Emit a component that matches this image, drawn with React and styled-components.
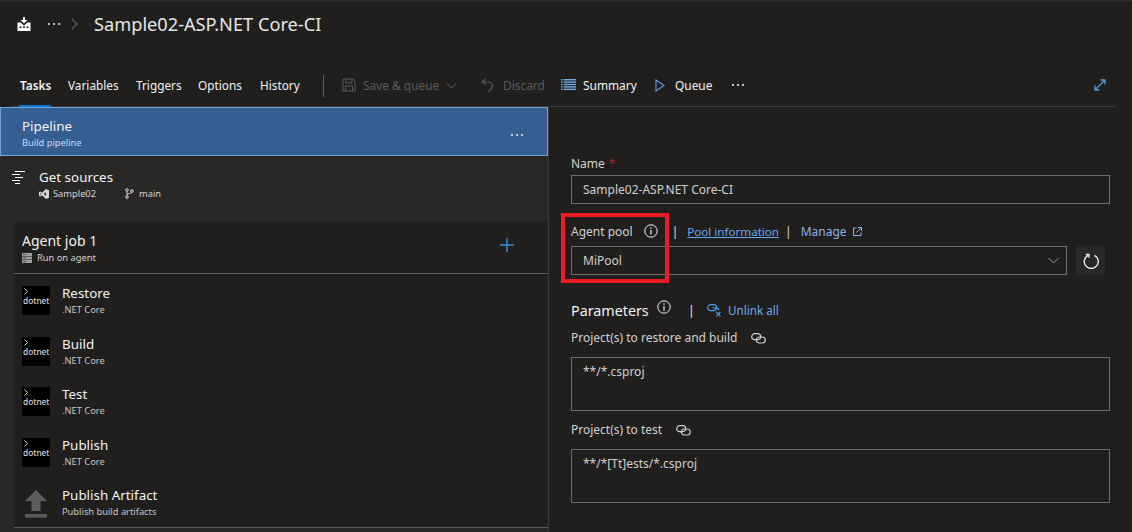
import React from 'react';
import styled, { createGlobalStyle } from 'styled-components';

const Global = createGlobalStyle`
html, body { margin: 0; padding: 0; background: #201f1e; }
body { font-family: "Noto Sans", "Open Sans", sans-serif; color: #fff; overflow: hidden; }
* { box-sizing: border-box; }
`;

const Page = styled.div`
  position: relative;
  width: 1132px;
  height: 532px;
  background: #201f1e;
  overflow: hidden;
  border-top: 2px solid #2b2a29;
`;

const TitleBar = styled.header`
  height: 64px;
  display: flex;
  align-items: flex-start;
  padding: 12px 0 0 17px;
`;

const Crumb = styled.div`
  height: 20px;
  display: flex;
  align-items: center;
  margin-right: ${p => p.$mr || 0}px;
  color: ${p => p.$color || '#fff'};
`;

const Title = styled.h1`
  margin: 0;
  font-size: 18.2px;
  line-height: 20px;
  font-weight: 400;
  color: #e6e6e6;
`;

const Toolbar = styled.nav`
  height: 41px;
  margin-left: 11px;
  width: 1104px;
  border-bottom: 1px solid #3b3a39;
  display: flex;
  align-items: flex-start;
  padding-top: 10px;
`;

const Tab = styled.div`
  position: relative;
  width: ${p => p.$w}px;
  flex: none;
  font-size: 11.8px;
  line-height: 18px;
  color: #f3f2f1;
  font-weight: ${p => (p.$active ? 600 : 400)};
  padding-left: ${p => p.$pl || 0}px;
  ${p => p.$active && `
    &:after {
      content: "";
      position: absolute;
      left: 8px;
      bottom: -13px;
      width: 32px;
      height: 2px;
      background: #0a78d4;
    }
  `}
`;

const Divider = styled.div`
  width: 1px;
  height: 22px;
  background: #605e5c;
  margin: -1px 18px 0 0;
  flex: none;
`;

const Action = styled.div`
  display: flex;
  align-items: center;
  height: 18px;
  flex: none;
  width: ${p => p.$w}px;
  gap: ${p => p.$gap || 6}px;
  font-size: 11.9px;
  color: ${p => (p.$off ? '#5c5b59' : '#f3f2f1')};
`;

const ExpandSlot = styled.div`
  margin-left: auto;
  margin-right: 9px;
  height: 18px;
  display: flex;
  align-items: center;
`;

const Main = styled.main`
  display: flex;
  height: 425px;
`;

const LeftPane = styled.section`
  width: 549px;
  flex: none;
  border-right: 1px solid #3b3a39;
  background: #292827;
`;

const PipelineRow = styled.div`
  height: 49px;
  background: #365f91;
  border: 1px solid #6fa3dc;
  padding: 9px 21px 0;
  display: flex;
  justify-content: space-between;
`;

const RowTitle = styled.div`
  font-size: 13.4px;
  line-height: 18px;
  color: #f3f2f1;
`;

const RowSub = styled.div`
  font-size: 9.3px;
  line-height: 13px;
  margin-top: ${p => p.$mt || 0}px;
  color: ${p => p.$color || '#d5d3d1'};
  display: flex;
  align-items: center;
  gap: ${p => p.$gap || 4}px;
`;

const More = styled.div`
  color: #dbe7f5;
  margin: 3px 2px 0 0;
`;

const SourcesRow = styled.div`
  height: 66px;
  display: flex;
  padding: 12px 0 0 12px;
  gap: 14px;
`;

const SourceMeta = styled.div`
  display: flex;
  margin-top: 1px;
`;

const SourceItem = styled.div`
  width: ${p => p.$w}px;
  display: flex;
  align-items: center;
  gap: ${p => p.$gap}px;
  font-size: 9.3px;
  line-height: 13px;
  color: #d5d3d1;
`;

const JobBlock = styled.div`
  margin-left: 14px;
  height: 306px;
  background: #201f1e;
  border-bottom: 1px solid #5c5b59;
`;

const JobHead = styled.div`
  height: 52px;
  border-bottom: 1px solid #5c5b59;
  padding: 10px 34px 0 8px;
  display: flex;
  justify-content: space-between;
  align-items: flex-start;
`;

const JobTitle = styled.div`
  font-size: 14px;
  line-height: 18px;
  color: #f3f2f1;
`;

const AddBtn = styled.div`
  margin-top: 3px;
  color: #3a8ee6;
`;

const TaskRow = styled.div`
  height: 50.6px;
  padding: 12px 0 0 8px;
  display: flex;
  gap: 12px;
`;

const DotnetBadge = styled.div`
  width: 28px;
  height: 29px;
  background: #000;
  color: #d8d8d8;
  flex: none;
  padding: 2px 0 0 1px;
  display: flex;
  flex-direction: column;
  overflow: hidden;
`;

const DotnetText = styled.span`
  font-size: 8.3px;
  line-height: 10px;
  font-weight: 500;
  margin-top: 1px;
`;

const ArtifactIcon = styled.div`
  width: 28px;
  height: 29px;
  flex: none;
  padding-top: 1px;
`;

const TaskText = styled.div`
  margin-top: -2px;
`;

const TaskName = styled.div`
  font-size: 13.4px;
  line-height: 18px;
  color: #f3f2f1;
`;

const TaskSub = styled.div`
  font-size: 9.3px;
  line-height: 13px;
  margin-top: 1px;
  color: #c8c6c4;
`;

const RightPane = styled.section`
  flex: 1;
  padding: 49px 22px 0 22px;
`;

const Label = styled.div`
  height: 16px;
  font-size: 12px;
  line-height: 16px;
  color: #d2d0ce;
  display: flex;
  align-items: center;
`;

const Star = styled.span`
  color: #a4262c;
  margin-left: 4px;
`;

const Field = styled.div`
  height: 29px;
  width: ${p => p.$w || 539}px;
  margin-top: ${p => p.$mt || 0}px;
  border: 1px solid #6e6d6b;
  font-size: 12px;
  line-height: 27px;
  padding-left: 11px;
  color: #d2d0ce;
  display: flex;
  justify-content: space-between;
  align-items: center;
`;

const AreaField = styled.div`
  height: 54px;
  width: 539px;
  border: 1px solid #6e6d6b;
  font-size: 12px;
  line-height: 16px;
  padding: 6px 0 0 11px;
  color: #d2d0ce;
`;

const PoolLabelRow = styled.div`
  height: 16px;
  margin-top: 19px;
  display: flex;
  align-items: center;
  font-size: 12px;
  color: #d2d0ce;
`;

const Sep = styled.span`
  display: inline-flex;
  align-items: center;
  color: #e1dfdd;
  margin: ${p => p.$m};
`;

const Link = styled.span`
  color: ${p => (p.$soft ? '#8ab4e8' : '#69a9ee')};
  font-size: ${p => p.$fs || 12}px;
  margin-left: ${p => p.$ml || 0}px;
  text-decoration: ${p => (p.$line ? 'underline' : 'none')};
`;

const PoolRow = styled.div`
  display: flex;
  margin-top: 7px;
  gap: 9px;
`;

const RefreshBtn = styled.div`
  width: 29px;
  height: 29px;
  background: #292827;
  display: flex;
  align-items: center;
  justify-content: center;
`;

const ParamsHead = styled.div`
  height: 22px;
  margin-top: 24px;
  display: flex;
  align-items: center;
`;

const ParamsTitle = styled.div`
  font-size: 14.3px;
  color: #f3f2f1;
`;

const ParamSep = styled(Sep)`
  font-size: 13px;
`;

const ParamLabel = styled(Label)`
  margin-top: ${p => p.$mt}px;
  margin-bottom: ${p => p.$mb}px;
`;

const Annotation = styled.div`
  position: absolute;
  left: 561px;
  top: 211px;
  width: 108px;
  height: 70px;
  border: 4px solid #ed1c24;
  pointer-events: none;
`;

const Dots = ({ size = 14, color = 'currentColor' }) => (
  <svg width={size} height="4" viewBox="0 0 14 4">
    <circle cx="2" cy="2" r="1.1" fill={color} />
    <circle cx="7" cy="2" r="1.1" fill={color} />
    <circle cx="12" cy="2" r="1.1" fill={color} />
  </svg>
);

const PipelinesIcon = () => (
  <svg width="14" height="14" viewBox="0 0 14 14" fill="#fff">
    <path d="M6 0h2v3h2.500L7 6.400 3.500 3H6z" />
    <path d="M.5 5.500h3L7 8.500l3.500-3h3V14H.5z" />
    <rect x="2.500" y="9.500" width="2" height="1.500" fill="#201f1e" />
    <rect x="6" y="9.500" width="2" height="1.500" fill="#201f1e" />
    <rect x="9.500" y="9.500" width="2" height="1.500" fill="#201f1e" />
  </svg>
);

const Chevron = ({ color = '#605e5c', w = 7, h = 12 }) => (
  <svg width={w} height={h} viewBox="0 0 7 12" fill="none" stroke={color} strokeWidth="1.100">
    <path d="M1 1l5 5-5 5" />
  </svg>
);

const SaveIcon = () => (
  <svg width="14" height="14" viewBox="0 0 14 14" fill="none" stroke="#5c5b59">
    <path d="M1 1h10l2 2v10H1z" />
    <path d="M4 1v4h6V1M3.500 13V8h7v5" />
  </svg>
);

const DownCaret = ({ color = '#5c5b59', w = 11 }) => (
  <svg width={w} height="7" viewBox="0 0 11 7" fill="none" stroke={color} strokeWidth="1">
    <path d="M.5 1l5 5 5-5" />
  </svg>
);

const UndoIcon = () => (
  <svg width="13" height="15" viewBox="0 0 13 15" fill="none" stroke="#5c5b59" strokeWidth="1.100">
    <path d="M4.500 1L1 4l4 2.500" />
    <path d="M1.500 4h5c3 0 5 1.500 5 4 0 2.500-2 4-4 6" />
  </svg>
);

const SummaryIcon = () => (
  <svg width="15" height="12" viewBox="0 0 15 12" fill="#6ea8e6">
    {[0, 2.4, 4.8, 7.2, 9.6].map(y => (
      <g key={y}>
        <rect x="0" y={y} width="1.500" height="1.400" />
        <rect x="2.500" y={y} width="12.500" height="1.400" />
      </g>
    ))}
  </svg>
);

const PlayIcon = () => (
  <svg width="10" height="13" viewBox="0 0 10 13" fill="none" stroke="#6f94e8" strokeWidth="1.100">
    <path d="M1 1l8 5.500L1 12z" />
  </svg>
);

const ExpandIcon = () => (
  <svg width="12" height="12" viewBox="0 0 12 12" fill="none" stroke="#4f9be8" strokeWidth="1.300">
    <path d="M1 11L11 1M6.500 1H11v4.500M1 6.500V11h4.500" />
  </svg>
);

const SourcesIcon = () => (
  <svg width="13" height="13" viewBox="0 0 13 13" fill="#fff" style={{ marginTop: 3 }}>
    <rect x="3" y="0" width="10" height="1" />
    <rect x="0" y="3" width="8" height="1" />
    <rect x="3" y="6" width="8" height="1" />
    <rect x="0" y="9" width="8" height="1" />
    <rect x="3" y="12" width="5" height="1" />
  </svg>
);

const VsIcon = () => (
  <svg width="10" height="10" viewBox="0 0 10 10" fill="#d5d3d1">
    <path d="M7 0l3 1.200v7.600L7 10 3 6.200 1.200 7.600 0 7V3l1.200-.6L3 3.800zM7 3L4.800 5 7 7zM1.200 4v2l1-1z" fillRule="evenodd" />
  </svg>
);

const BranchIcon = () => (
  <svg width="9" height="11" viewBox="0 0 9 11" fill="none" stroke="#d5d3d1" strokeWidth="1">
    <circle cx="2" cy="2" r="1.300" />
    <circle cx="2" cy="9" r="1.300" />
    <circle cx="7" cy="3" r="1.300" />
    <path d="M2 3.300v4.400M2 6.500c0-1 4-.8 5-2.200" />
  </svg>
);

const ServerIcon = () => (
  <svg width="10" height="10" viewBox="0 0 10 10" fill="#a19f9d" style={{ display: 'block' }}>
    <rect x="0" y="0" width="10" height="3" />
    <rect x="0" y="3.500" width="10" height="3" />
    <rect x="0" y="7" width="10" height="3" />
    <rect x="1" y="1" width="3" height=".8" fill="#3b3a39" />
    <rect x="1" y="4.500" width="3" height=".8" fill="#3b3a39" />
    <rect x="1" y="8" width="3" height=".8" fill="#3b3a39" />
  </svg>
);

const PlusIcon = () => (
  <svg width="14" height="14" viewBox="0 0 14 14" fill="currentColor">
    <rect x="6.300" y="0" width="1.400" height="14" />
    <rect x="0" y="6.300" width="14" height="1.400" />
  </svg>
);

const PromptIcon = () => (
  <svg width="4" height="7" viewBox="0 0 4 7" fill="none" stroke="#d8d8d8" strokeWidth="1" style={{ display: 'block', flex: 'none', marginLeft: 1 }}>
    <path d="M.5.5l3 3-3 3" />
  </svg>
);

const UploadIcon = () => (
  <svg width="28" height="29" viewBox="0 0 28 29" fill="#5e5d5c">
    <path d="M14 1l11 11h-6.500v10h-9V12H3z" />
    <rect x="3" y="25" width="22" height="3.500" />
  </svg>
);

const InfoIcon = ({ size = 14 }) => (
  <svg width={size} height={size} viewBox="0 0 14 14" fill="none" stroke="#f3f2f1" strokeWidth="1">
    <circle cx="7" cy="7" r="6.200" />
    <path d="M7 6v4.500" strokeWidth="1.200" />
    <circle cx="7" cy="4" r=".8" fill="#f3f2f1" stroke="none" />
  </svg>
);

const ExternalIcon = () => (
  <svg width="9" height="9" viewBox="0 0 9 9" fill="none" stroke="#8ab4e8" strokeWidth="1">
    <path d="M3.500 1H.5v7.500H8V5.500" />
    <path d="M3.500 5.500L8 1M5 .5h3.500V4" />
  </svg>
);

const RefreshIcon = () => (
  <svg width="16" height="16" viewBox="0 0 16 16" fill="none" stroke="#f3f2f1" strokeWidth="1.300">
    <path d="M5 2.300a7 7 0 1 0 6.500 0" />
    <path d="M2.800 1.500H6v3.300" />
  </svg>
);

const LinkIcon = ({ color = '#d2d0ce' }) => (
  <svg width="15" height="11" viewBox="0 0 15 11" fill="none" stroke={color} strokeWidth="1.200">
    <rect x=".7" y=".7" width="9" height="6" rx="3" />
    <rect x="5.300" y="4" width="9" height="6" rx="3" />
  </svg>
);

const UnlinkIcon = () => (
  <svg width="15" height="13" viewBox="0 0 15 13" fill="none" stroke="#4f9be8" strokeWidth="1.200">
    <rect x=".7" y=".7" width="9" height="6" rx="3" />
    <path d="M5.500 4h3.500a3 3 0 0 1 3 2" />
    <path d="M9.500 8l4 4.300M13.500 8l-4 4.300" />
  </svg>
);

const tasks = [
  { name: 'Restore', sub: '.NET Core' },
  { name: 'Build', sub: '.NET Core' },
  { name: 'Test', sub: '.NET Core' },
  { name: 'Publish', sub: '.NET Core' },
  { name: 'Publish Artifact', sub: 'Publish build artifacts', upload: true },
];

export default function App() {
  return (
    <Page>
      <Global />
      <TitleBar>
        <Crumb $mr={16}><PipelinesIcon /></Crumb>
        <Crumb $mr={10} $color="#e1dfdd"><Dots /></Crumb>
        <Crumb $mr={16}><Chevron /></Crumb>
        <Title>Sample02-ASP.NET Core-CI</Title>
      </TitleBar>
      <Toolbar>
        <Tab $w={57} $pl={9} $active>Tasks</Tab>
        <Tab $w={68}>Variables</Tab>
        <Tab $w={62}>Triggers</Tab>
        <Tab $w={62}>Options</Tab>
        <Tab $w={63}>History</Tab>
        <Divider />
        <Action $off $w={139} $gap={7}>
          <SaveIcon />
          <span>Save &amp; queue</span>
          <DownCaret />
        </Action>
        <Action $off $w={80} $gap={9}>
          <UndoIcon />
          <span>Discard</span>
        </Action>
        <Action $w={94} $gap={7}>
          <SummaryIcon />
          <span>Summary</span>
        </Action>
        <Action $w={75} $gap={10}>
          <PlayIcon />
          <span>Queue</span>
        </Action>
        <Action $w={20}><Dots size={16} /></Action>
        <ExpandSlot><ExpandIcon /></ExpandSlot>
      </Toolbar>
      <Main>
        <LeftPane>
          <PipelineRow>
            <div>
              <RowTitle>Pipeline</RowTitle>
              <RowSub $color="#c9dcf2" $mt={1}>Build pipeline</RowSub>
            </div>
            <More><Dots /></More>
          </PipelineRow>
          <SourcesRow>
            <SourcesIcon />
            <div>
              <RowTitle>Get sources</RowTitle>
              <SourceMeta>
                <SourceItem $w={86} $gap={4}><VsIcon /> Sample02</SourceItem>
                <SourceItem $w={60} $gap={5}><BranchIcon /> main</SourceItem>
              </SourceMeta>
            </div>
          </SourcesRow>
          <JobBlock>
            <JobHead>
              <div>
                <JobTitle>Agent job 1</JobTitle>
                <RowSub $gap={5} $mt={1}><ServerIcon /> Run on agent</RowSub>
              </div>
              <AddBtn><PlusIcon /></AddBtn>
            </JobHead>
            {tasks.map(t => (
              <TaskRow key={t.name}>
                {t.upload
                  ? <ArtifactIcon><UploadIcon /></ArtifactIcon>
                  : <DotnetBadge><PromptIcon /><DotnetText>dotnet</DotnetText></DotnetBadge>}
                <TaskText>
                  <TaskName>{t.name}</TaskName>
                  <TaskSub>{t.sub}</TaskSub>
                </TaskText>
              </TaskRow>
            ))}
          </JobBlock>
        </LeftPane>
        <RightPane>
          <Label>Name <Star>*</Star></Label>
          <Field $mt={3}>Sample02-ASP.NET Core-CI</Field>
          <PoolLabelRow>
            Agent pool
            <Sep $m="0 9px 0 11px"><InfoIcon /></Sep>
            <Sep $m="0 9px 0 5px">|</Sep>
            <Link $line $fs={11.6}>Pool information</Link>
            <Sep $m="0 9px 0 6px">|</Sep>
            <Link $soft>Manage</Link>
            <Sep $m="0 0 0 6px"><ExternalIcon /></Sep>
          </PoolLabelRow>
          <PoolRow>
            <Field $w={496}>
              MiPool
              <Sep $m="0 7px 0 0"><DownCaret color="#a19f9d" w={11} /></Sep>
            </Field>
            <RefreshBtn><RefreshIcon /></RefreshBtn>
          </PoolRow>
          <ParamsHead>
            <ParamsTitle>Parameters</ParamsTitle>
            <Sep $m="-6px 0 0 8px"><InfoIcon /></Sep>
            <ParamSep $m="0 12px 0 17px">|</ParamSep>
            <UnlinkIcon />
            <Link $ml={6} $fs={11.7}>Unlink all</Link>
          </ParamsHead>
          <ParamLabel $mt={9} $mb={11}>
            Project(s) to restore and build
            <Sep $m="0 0 0 14px"><LinkIcon /></Sep>
          </ParamLabel>
          <AreaField>**/*.csproj</AreaField>
          <ParamLabel $mt={11} $mb={11}>
            Project(s) to test
            <Sep $m="0 0 0 14px"><LinkIcon /></Sep>
          </ParamLabel>
          <AreaField>**/*[Tt]ests/*.csproj</AreaField>
        </RightPane>
      </Main>
      <Annotation />
    </Page>
  );
}
